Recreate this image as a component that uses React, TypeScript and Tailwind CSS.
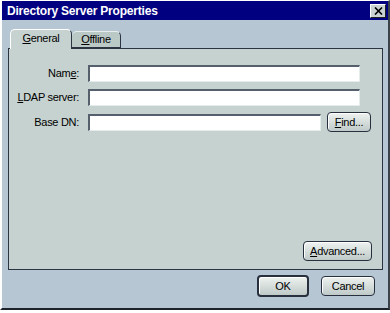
export default function App() {
  const font = { fontFamily: '"Liberation Sans", Arial, sans-serif' };
  const btn =
    "flex items-center justify-center rounded-[4px] border border-[#283040] bg-linear-to-b from-[#eef2f0] to-[#bfcac8] shadow-[inset_1px_1px_0_#ffffff] text-[11px] tracking-[-0.3px] text-black";
  const input =
    "h-[17px] bg-white border-t-2 border-l-2 border-b border-r border-t-[#55606c] border-l-[#55606c] border-b-[#e4ecec] border-r-[#e4ecec]";

  return (
    <div className="w-[390px] h-[313px] bg-white" style={font}>
      <div className="w-[390px] h-[310px] flex flex-col bg-[#b6c6d2] border-t border-l-2 border-t-white border-l-white border-r-2 border-b-2 border-r-[#3a424a] border-b-[#1c222a]">
        {/* title bar */}
        <div className="h-[19px] bg-[#000080] flex items-center justify-between pl-[5px] pr-[2px]">
          <span className="text-white font-bold text-[12px] tracking-[-0.2px] leading-none">
            Directory Server Properties
          </span>
          <button className="w-[16px] h-[14px] flex items-center justify-center bg-[#cad2d2] border-t border-l border-t-white border-l-white border-r border-b border-r-[#202020] border-b-[#202020]">
            <svg width="9" height="8" viewBox="0 0 9 8">
              <path d="M1 0.5 L8 7.5 M8 0.5 L1 7.5" stroke="#000" strokeWidth="1.6" />
            </svg>
          </button>
        </div>

        {/* tabs */}
        <div className="mt-[9px] ml-[8px] flex items-end h-[19px] relative z-10">
          <div className="w-[62px] h-[20px] -mb-px bg-[#c6d2cf] rounded-t-[5px] border-t border-l border-t-white border-l-white border-r border-r-[#2c3444] flex items-center justify-center pb-[2px] text-[11px] tracking-[-0.3px] text-black">
            <span>
              <span className="underline underline-offset-1">G</span>eneral
            </span>
          </div>
          <div className="w-[49px] h-[17px] bg-[#bac8c6] rounded-t-[5px] border-t border-t-[#e8eeee] border-r border-r-[#2c3444] border-b border-b-[#2c3444] flex items-center justify-center text-[11px] tracking-[-0.3px] text-black">
            <span>
              <span className="underline underline-offset-1">O</span>ffline
            </span>
          </div>
        </div>

        {/* panel */}
        <div className="ml-[6px] w-[375px] h-[222px] bg-[#c6d2cf] border border-[#2c3444] flex flex-col pt-[16px] pb-[8px] pr-[10px]">
          <div className="flex items-center">
            <label className="w-[70px] text-right text-[11px] tracking-[-0.3px] text-black">
              Nam<span className="underline underline-offset-1">e</span>:
            </label>
            <div className={`${input} ml-[9px] w-[272px]`} />
          </div>
          <div className="flex items-center mt-[7px]">
            <label className="w-[70px] text-right text-[11px] tracking-[-0.3px] text-black">
              <span className="underline underline-offset-1">L</span>DAP server:
            </label>
            <div className={`${input} ml-[9px] w-[272px]`} />
          </div>
          <div className="flex items-center mt-[6px]">
            <label className="w-[70px] text-right text-[11px] tracking-[-0.3px] text-black">
              Base DN:
            </label>
            <div className={`${input} ml-[9px] w-[233px]`} />
            <button className={`${btn} ml-[6px] w-[44px] h-[20px]`}>
              <span>
                <span className="underline underline-offset-1">F</span>ind...
              </span>
            </button>
          </div>
          <div className="flex-1" />
          <div className="flex justify-end">
            <button className={`${btn} w-[69px] h-[20px]`}>
              <span>
                <span className="underline underline-offset-1">A</span>dvanced...
              </span>
            </button>
          </div>
        </div>

        {/* bottom buttons */}
        <div className="flex items-center justify-end gap-[12px] pr-[13px] mt-[5px]">
          <button className={`${btn} w-[52px] h-[22px] border-2`}>OK</button>
          <button className={`${btn} w-[54px] h-[20px]`}>Cancel</button>
        </div>
      </div>
    </div>
  );
}
